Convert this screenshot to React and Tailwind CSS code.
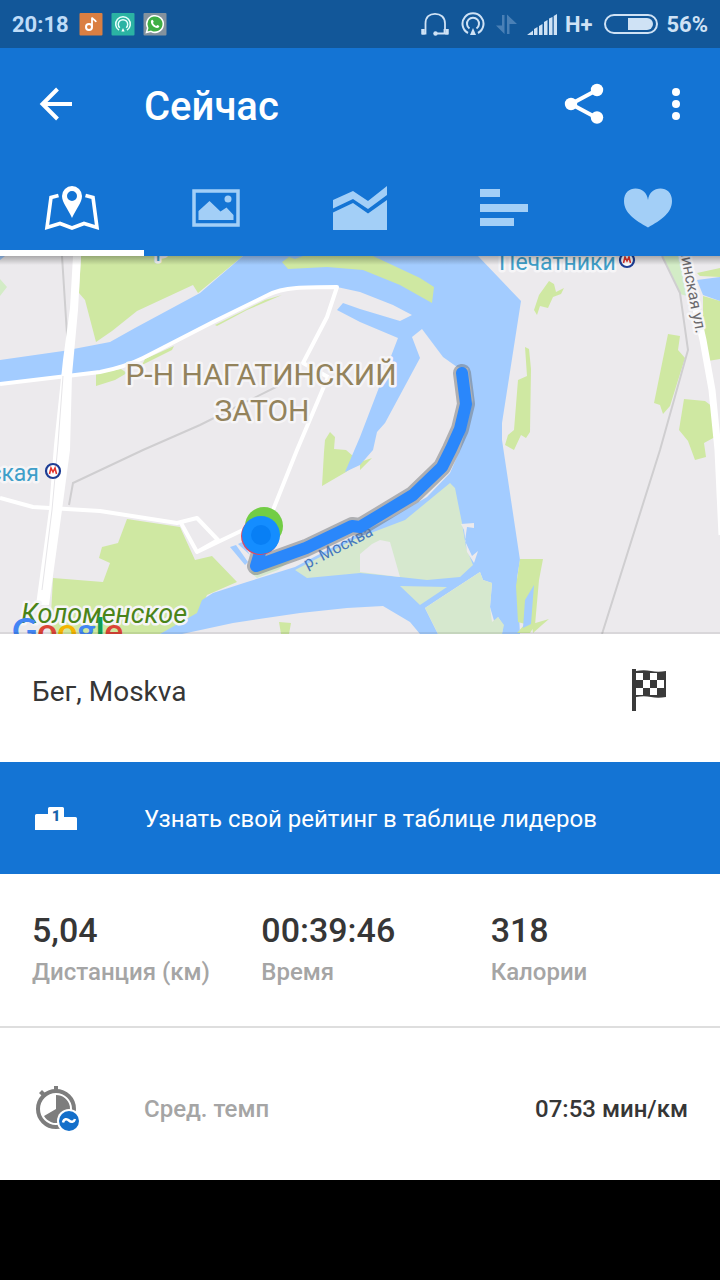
import React from "react";

const halo = { paintOrder: "stroke", stroke: "#f6f5f7", strokeWidth: 5, strokeLinejoin: "round" };

function StatusBar() {
  return (
    <div className="flex h-12 items-center bg-[#125799] px-3 text-[#cfe2f5]">
      <span className="pt-0.5 text-[22px] font-bold leading-none text-[#bfdcf8]">20:18</span>
      <div className="ml-[10px] flex items-center gap-2">
        <svg className="size-6" viewBox="0 0 24 24">
          <rect x="0.5" y="1" width="23" height="22.5" rx="1" fill="#da7f42" />
          <circle cx="10" cy="15" r="3" fill="none" stroke="#fff" strokeWidth="2" />
          <path d="M13 15V5.5c.5 2 3.500 2 4 4.500" fill="none" stroke="#fff" strokeWidth="1.800" />
        </svg>
        <svg className="size-6" viewBox="0 0 24 24" fill="none" stroke="#e8fffb">
          <rect x="0.5" y="1" width="23" height="22.5" rx="1" fill="#2bb3a3" stroke="none" />
          <path d="M8 18.200a7.300 7.300 0 1 1 8 0" strokeWidth="1.500" />
          <path d="M8.800 15.800a4.700 4.700 0 1 1 6.400 0" strokeWidth="1.500" />
          <path d="M12 16l1.600 3.500h-3.200z" fill="#fff" stroke="none" />
        </svg>
        <svg className="size-6" viewBox="0 0 24 24">
          <rect x="0.5" y="1" width="23" height="22.5" rx="1" fill="#84929d" />
          <path d="M3.500 20.500l1.200-4.500A8.300 8.300 0 1 1 8 19.300z" fill="#3fae45" stroke="#fff" strokeWidth="1.500" />
          <path d="M8.200 8.500c1-1.500 1.800-.8 2.500 1.300l-.7 1.200c.8 1.500 1.700 2.300 3.200 2.900l1.100-1c2 .7 2.500 1.200 1.600 2.300-1.500 1.700-4.500.3-6-1.200-1.500-1.500-2.600-4-1.700-5.500z" fill="#fff" />
        </svg>
      </div>
      <div className="ml-auto flex items-center">
        <svg className="h-6 w-7" viewBox="0 0 28 24" fill="none" stroke="currentColor" strokeWidth="1.800">
          <path d="M4.500 18v-6.500C4.500 5 8.500 1.800 14 1.800s10 3.200 10 9.700V18M1 21.500h3.500V17M27 21.500H15M23.500 17v4.500" />
          <path d="M2 17v5.500M26 17v5.500" strokeWidth="3.500" />
          <circle cx="14.500" cy="21.500" r="2.200" fill="currentColor" stroke="none" />
        </svg>
        <svg className="ml-3 size-6" viewBox="0 0 24 24" fill="none" stroke="currentColor" strokeWidth="2">
          <path d="M7 21a10.500 10.500 0 1 1 10 0" />
          <path d="M8.500 16.500a6 6 0 1 1 7 0" />
          <path d="M12 16l3 7H9z" fill="currentColor" stroke="none" />
        </svg>
        <svg className="ml-[10px] h-6 w-[22px] text-[#4a80b6]" viewBox="0 0 22 24" fill="currentColor">
          <path d="M7 3h2.500v19L1 13.500h6zM12 22h2.500V12H22L12 2.500z" />
        </svg>
        <svg className="ml-[10px] h-6 w-[30px]" viewBox="0 0 30 24" fill="currentColor">
          <path d="M0 23l6-4.500V23zM7 17l3.500-2v8H7zM12 14l3.500-2v11H12zM17 10l3.500-2v15H17zM22 6.500L25.500 5v18H22zM26.700 4L30 2v21h-3.300z" />
        </svg>
        <span className="ml-2 pt-0.5 text-[22px] font-bold leading-none">H+</span>
        <svg className="ml-[12px] h-6 w-[54px]" viewBox="0 0 54 24">
          <rect x="1" y="3" width="52" height="18" rx="9" fill="none" stroke="currentColor" strokeWidth="2" />
          <path d="M24 6h19a6 6 0 0 1 0 12H24z" fill="currentColor" />
        </svg>
        <span className="ml-2 pt-0.5 text-[22px] font-bold leading-none">56%</span>
      </div>
    </div>
  );
}

function Toolbar() {
  return (
    <div className="flex h-28 items-center pl-8 text-white">
      <button type="button" aria-label="Назад" className="flex size-12 items-center justify-center">
        <svg className="size-12" viewBox="0 0 48 48" fill="none" stroke="currentColor" strokeWidth="4">
          <path d="M40 24H11M25.500 9L10.500 24l15 15" />
        </svg>
      </button>
      <h1 className="ml-16 pt-1.5 text-[40px] font-medium leading-none">Сейчас</h1>
      <button type="button" aria-label="Поделиться" className="ml-auto flex size-12 items-center justify-center">
        <svg className="size-12" viewBox="0 0 48 48" fill="currentColor">
          <path d="M37 10L11 24l26 14" fill="none" stroke="currentColor" strokeWidth="4" />
          <circle cx="37" cy="10" r="6.200" />
          <circle cx="11" cy="24" r="6.200" />
          <circle cx="37" cy="37.500" r="6.200" />
        </svg>
      </button>
      <button type="button" aria-label="Ещё" className="ml-11 mr-5 flex size-12 items-center justify-center">
        <svg className="size-12" viewBox="0 0 48 48" fill="currentColor">
          <circle cx="24" cy="12" r="4" />
          <circle cx="24" cy="24" r="4" />
          <circle cx="24" cy="36" r="4" />
        </svg>
      </button>
    </div>
  );
}

const tabs = [
  {
    label: "Карта",
    icon: (
      <>
        <path d="M14.500 11.500l-7.500 2L3 43.500l13-4 12 4.500 12-4.500 13 4-4-30-7.500-2" fill="none" stroke="currentColor" strokeWidth="3.600" />
        <path fillRule="evenodd" d="M28 2a10 10 0 0 1 10 10c0 6.500-6 13-10 22-4-9-10-15.500-10-22A10 10 0 0 1 28 2zM28 7a5 5 0 1 0 0 10 5 5 0 0 0 0-10z" />
      </>
    ),
  },
  {
    label: "Фото",
    icon: (
      <>
        <rect x="6" y="7" width="44" height="34" fill="none" stroke="currentColor" strokeWidth="3.500" />
        <path d="M10.500 36v-9l11-10 11 10.500 6-4 7 7.500v5z" />
        <circle cx="40" cy="15" r="3.500" />
      </>
    ),
  },
  { label: "Графики", icon: <path d="M1 16L21 7l15 10L55 2v9L36 25 21 15 1 24.500zM1 28.500L21 19l15 10.500L55 16v30H1z" /> },
  { label: "Интервалы", icon: <path d="M4 5h20v8H4zM4 20h48v8H4zM4 34h34v8H4z" /> },
  {
    label: "Пульс",
    icon: <path d="M28 43.500C15 36 4 29 4 17 4 8.500 9.500 4.500 15.500 4.500 22 4.500 27 8.500 28 16c1-7.500 6-11.500 12.500-11.500C46.500 4.500 52 8.500 52 17c0 12-11 19-24 26.500z" />,
  },
];

function Tabs() {
  return (
    <nav className="grid h-24 grid-cols-5">
      {tabs.map((t, i) => (
        <button
          key={t.label}
          type="button"
          aria-label={t.label}
          className={
            i === 0
              ? "flex items-center justify-center border-b-6 border-white pt-[6px] text-white"
              : "flex items-center justify-center border-b-6 border-transparent pt-[6px] text-[#a3cff7]"
          }
        >
          <svg className="h-12 w-14" viewBox="0 0 56 48" fill="currentColor">
            {t.icon}
          </svg>
        </button>
      ))}
    </nav>
  );
}

function Metro({ x, y }) {
  return (
    <g>
      <circle cx={x} cy={y} r="7" fill="#fff" stroke="#1d3d94" strokeWidth="2.200" />
      <path d={`M${x - 3.5} ${y + 3}l1.500-6 2 4 2-4 1.500 6`} fill="none" stroke="#e2342d" strokeWidth="1.600" />
    </g>
  );
}

function RouteMap() {
  return (
    <svg
      className="block h-[378px] w-full bg-[#eceaed]"
      viewBox="0 256 720 378"
      preserveAspectRatio="xMidYMid slice"
      fontFamily="Roboto, sans-serif"
      role="img"
      aria-label="Маршрут пробежки"
    >
      <defs>
        <linearGradient id="shade" x1="0" y1="0" x2="0" y2="1">
          <stop offset="0" stopColor="#000" stopOpacity="0.280" />
          <stop offset="1" stopColor="#000" stopOpacity="0" />
        </linearGradient>
      </defs>
      <g fill="#cfe8a2">
        <path d="M81 256h162l-45 37-5-8-56 26-25 20-16 11-11-42-6-7z" />
        <path d="M96 374l25-5 6 4-12 7-19 6zM145 359l29-13-2 4-30 15zM215 325l50-25 17-5-35 15-30 16z" />
        <path d="M127 519l53 8 15 33 17-4 25 26-30 13-10 22-37 17H50l3-56 50 4 7-19-11-5 3-11 16-4z" />
        <path d="M325 440l5-8 5 5-1 12 12 1 14 12-14 10-24 14 2-34zM360 462l12-4-12 12z" />
        <path d="M549 281l5 3 2 8 8-4-3 6-8 3-5 11-8-2-3 9-3-5 5-15zM525 347l4 2 2 20-1 63-4 6-5-3-7 15-9-5 3-10 6-5 4-50 9-4z" />
        <path d="M668 334l12 2-2 14 7 8-15 48-7 8-3-9-6-2zM684 399l21 2 8 6 2 30-11 6 2 14-11 3-7-19-9-11z" />
        <path d="M697 273l23-5v9l-20-1zM703 296l17 5v58l-12 2-5-25z" />
      </g>
      <path d="M662 256h17l8 40-7-2zM0 279l7 8-7 9z" fill="#d3ecc6" />
      <path
        d="M478 256L521 301L502 423V440L520 560L517 578L520 634H502L503 625L498 617L495 624L490 607L492 583L483 580L480 572L434 602L425 608L438 634H420L410 622L383 606L347 608L300 613L233 623L182 634H160L197 613L202 600L213 593L247 582L295 567L360 533L393 517L427 497L450 473L460 450L473 400L468 368L457 367L443 357L422 329L412 337L420 358L385 423L377 432L373 450L360 465L345 472L360 437L398 338L360 322L337 310L343 303L360 309L400 321L412 315L393 305L360 292L337 287L300 286L273 293L213 322L143 358L100 372L67 376L0 384V360L63 351L110 342L135 328L200 293L243 256Z"
        fill="#a3ccff"
      />
      <path d="M697 280l23-3v24l-17-6zM230 547l6-2 12 17-3 3zM238 544l4-2 8 13zM0 256h5l-5 4z" fill="#a3ccff" />
      <path d="M282 262l6 7 39-2 36 3 37 15 32 18 2-16-14-9-47-22h-70l-8 3-6-2z" fill="#cfe8a2" />
      <g fill="#d6e8ce">
        <path d="M450 483l5 5 7 35 4 24 7 18-13 12-33 3-27-3-40-4-53 5-12-8 60-31 50-19z" />
        <path d="M400 586l47 1-27 18zM480 572l3 8 9 3-2 24 2 15 6-5 6 8-2 9h-64l-13-26z" />
        <path d="M250 572l52-20-24 18-21 8z" />
      </g>
      <path d="M360 554l12-10 8-4 10 2 10 35-40-5zM461 524l13-1v5l-7-1-2 14 7 15 6-5-4 12-7-11-3-22z" fill="#eceaed" />
      <path d="M520 559h23l-4 21-4 45-5 8h-13l8-9-7-2-2-36zM532 624l17-5-7 6-9 8zM279 622l12 1-2 11h-8z" fill="#cfe8a2" />
      <path d="M534 585l-9 15-2 28 8-4z" fill="#a3ccff" />
      <path d="M62 256l6 94M280 385l-80 40-57 25-70 33-4 22M662 256l18 37 8 57-28 100-58 184" fill="none" stroke="#cfced0" strokeWidth="2" />
      <g fill="none" stroke="#fff" strokeWidth="4" strokeLinejoin="round">
        <path d="M0 384l67-8 33-4c20-4 33-9 43-14l70-36 55-27c15-8 38-8 69-8l-10 30-24 46 25 14-31 73-24 60" />
        <path d="M0 498l33 9 67 4 77 12 20-5 21 22-21 12-16-29M197 552l46-22" />
        <path d="M684 256l19 84 9 50 6 60 4 85" strokeWidth="7" />
      </g>
      <path d="M73 256h8l-3 54-6 65-2 75-8 60-13 95H36l13-95 5-65 9-85 7-52z" fill="#fff" />
      <path d="M63 376l-5 68-6 66-10 80" fill="none" stroke="#e6e5e8" strokeWidth="1" />

      <g fontSize="30" fill="#93835c" textAnchor="middle" style={halo}>
        <text x="261" y="385">Р-Н НАГАТИНСКИЙ</text>
        <text x="262" y="421">ЗАТОН</text>
      </g>
      <g fontSize="23" fill="#409fc9" style={halo}>
        <text x="499" y="270">Печатники</text>
        <text x="39" y="481" textAnchor="end">ская</text>
        <text x="162" y="256" textAnchor="middle">р</text>
      </g>
      <text fontSize="16" fill="#6c6a6d" style={halo} transform="translate(696 334) rotate(79)" textAnchor="end">
        линская ул.
      </text>
      <Metro x={627} y={260} />
      <Metro x={53} y={471} />
      <text x="21" y="623" fontSize="27" fontStyle="italic" fill="#4a8418" style={halo}>
        Коломенское
      </text>
      <text x="12" y="643" fontSize="35" fontWeight="700" fontFamily="Lato, sans-serif">
        <tspan fill="#4285f4">G</tspan>
        <tspan fill="#db4437">o</tspan>
        <tspan fill="#f4b400">o</tspan>
        <tspan fill="#4285f4">g</tspan>
        <tspan fill="#0f9d58">l</tspan>
        <tspan fill="#db4437">e</tspan>
      </text>

      <circle cx="264" cy="526" r="19" fill="#72cd45" />
      <text fontSize="16" fill="#4779bd" transform="translate(307 569) rotate(-27)">
        р. Москва
      </text>
      <g fill="none" strokeLinejoin="round" strokeLinecap="round">
        <path d="M462 373l4 31-6 25-9 20-9 18-29 28-53 32-8-1-46 22-50 18 6-20" stroke="#6f7378" strokeOpacity="0.500" strokeWidth="18" />
        <path d="M462 373l4 31-6 25-9 20-9 18-29 28-53 32-8-1-46 22-50 18 6-20" stroke="#2a87fb" strokeWidth="12" />
      </g>
      <circle cx="260" cy="536" r="19" fill="#d64a67" />
      <circle cx="261" cy="535" r="19" fill="#148dff" />
      <circle cx="261" cy="535" r="10" fill="#087ff5" />
      <rect x="0" y="256" width="720" height="9" fill="url(#shade)" />
      <rect x="0" y="632" width="720" height="2" fill="#000" fillOpacity="0.080" />
    </svg>
  );
}

const stats = [
  { value: "5,04", label: "Дистанция (км)" },
  { value: "00:39:46", label: "Время" },
  { value: "318", label: "Калории" },
];

export default function App() {
  return (
    <div className="min-h-screen bg-black font-['Roboto',sans-serif]">
      <header className="bg-[#1474d4]">
        <StatusBar />
        <Toolbar />
        <Tabs />
      </header>
      <main className="bg-white text-[#363636]">
        <RouteMap />
        <section className="flex h-32 items-center justify-between pb-4 pl-8 pr-12">
          <h2 className="pt-1 text-[28px] leading-8">Бег, Moskva</h2>
          <svg className="h-12 w-10" viewBox="0 0 40 48" fill="#3a3a3a">
            <path d="M0 3h4v42H0z" />
            <path fillRule="evenodd" d="M4 5q8-1.500 15 0t15 0v26q-8 1.500-15 0T4 31zM4 7v7h7V7zM18 7v7h7V7zM11 14v8h7v-8zM25 14v8h7v-8zM4 22v7h7v-7zM18 22v7h7v-7z" />
          </svg>
        </section>
        <a href="#leaderboard" className="flex h-28 items-center bg-[#1474d4] px-8 text-white">
          <svg className="h-6 w-12" viewBox="0 0 48 24">
            <path d="M3 24V9.500q0-1.500 1.500-1.500H16V2.500Q16 1 17.500 1h13Q32 1 32 2.500V11h11.500q1.500 0 1.500 1.500V24z" fill="#fff" />
            <text x="24" y="15" fontSize="15" fontWeight="900" fontFamily="Roboto, sans-serif" textAnchor="middle" fill="#1a64ac">1</text>
          </svg>
          <span className="ml-16 pt-0.5 text-2xl">Узнать свой рейтинг в таблице лидеров</span>
        </a>
        <dl className="grid grid-cols-3 border-b-2 border-[#dedede] pb-9 pl-8 pt-9">
          {stats.map((s) => (
            <div key={s.label} className="flex flex-col-reverse">
              <dt className="mt-1 text-2xl font-medium leading-9 text-[#a5a5a5]">{s.label}</dt>
              <dd className="text-[34px] font-medium leading-10">{s.value}</dd>
            </div>
          ))}
        </dl>
        <section className="flex h-[152px] items-center px-8 pt-2">
          <svg className="size-12" viewBox="0 0 48 48">
            <path d="M22 2h4v4h-4zM7 9l3-3 4 4-3 3z" fill="#7d7d7d" />
            <circle cx="24" cy="25" r="18" fill="none" stroke="#7d7d7d" strokeWidth="4" />
            <path d="M24 25V11a14 14 0 1 1-12 21z" fill="#7d7d7d" />
            <circle cx="37" cy="37" r="12" fill="#fff" />
            <circle cx="37" cy="37" r="10" fill="#146fca" />
            <path d="M31 38.500c1-4 4-4 6-2s5 2 6-1.500" fill="none" stroke="#fff" strokeWidth="2.500" />
          </svg>
          <span className="ml-16 pt-0.5 text-2xl font-medium text-[#a5a5a5]">Сред. темп</span>
          <span className="ml-auto pt-0.5 text-2xl font-medium">07:53 мин/км</span>
        </section>
      </main>
    </div>
  );
}
